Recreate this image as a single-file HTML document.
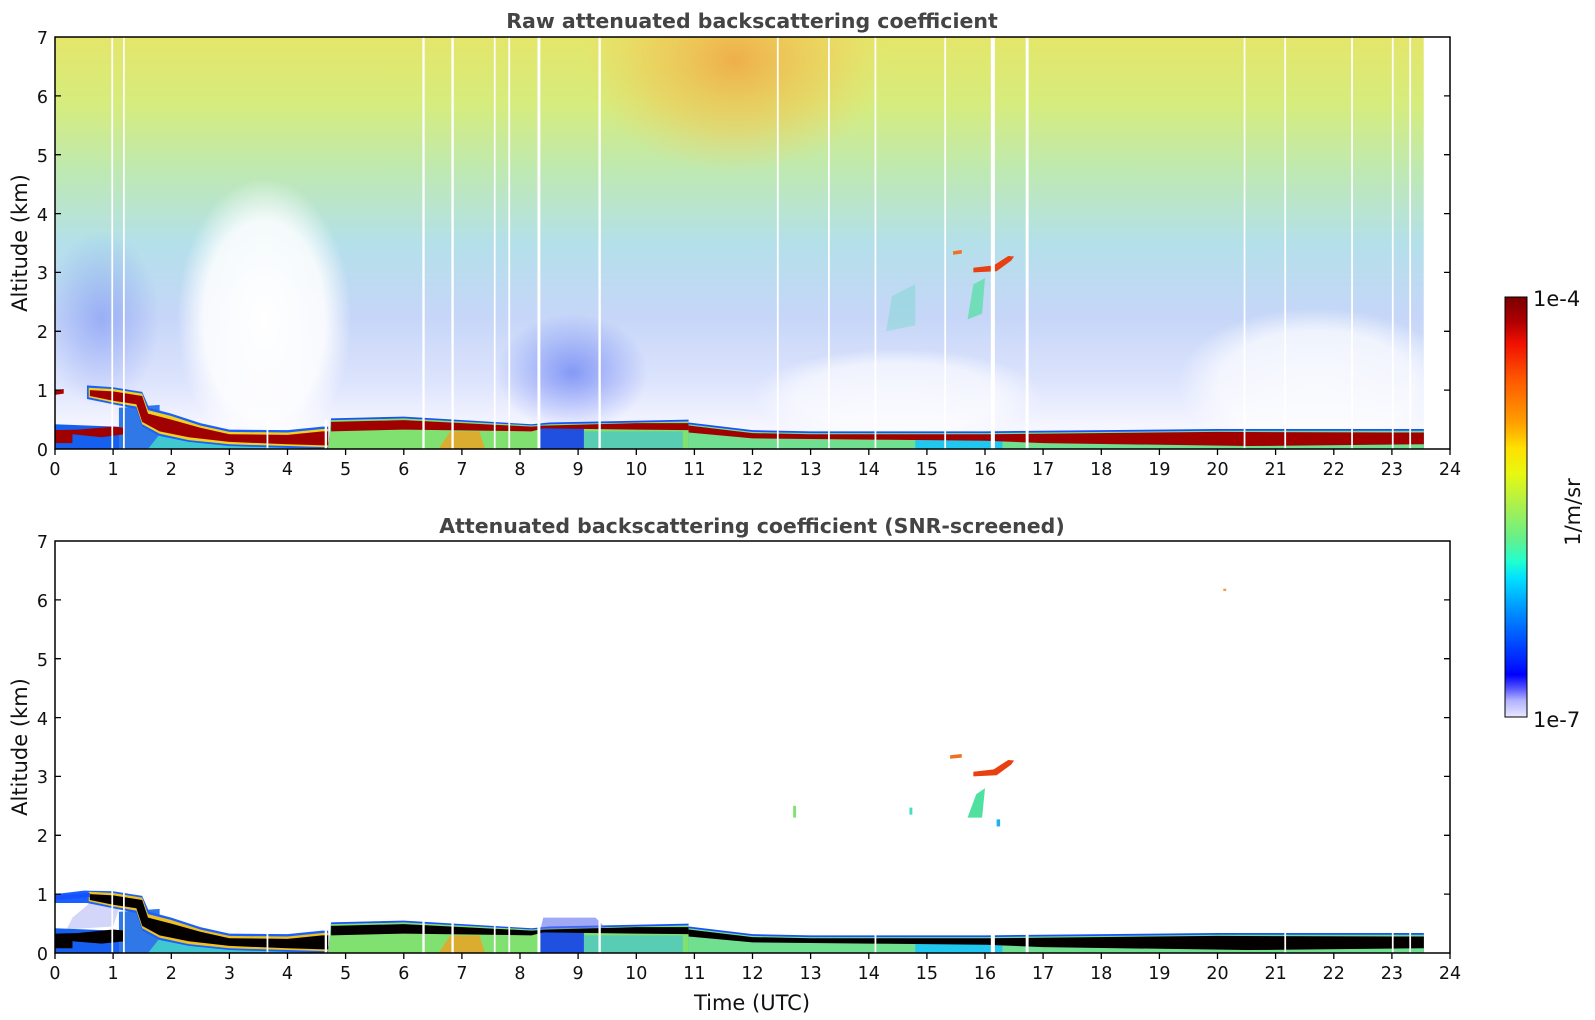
<!DOCTYPE html>
<html><head><meta charset="utf-8"><style>
html,body{margin:0;padding:0;background:#fff;width:1595px;height:1020px;overflow:hidden}
svg{display:block}
text{font-family:"DejaVu Sans","Liberation Sans",sans-serif;fill:#111}
</style></head><body>
<svg width="1595" height="1020" viewBox="0 0 1595 1020" xmlns="http://www.w3.org/2000/svg">
<defs>
<clipPath id="c1"><rect x="0" y="0" width="23.55" height="7"/></clipPath>
<linearGradient id="bg" x1="0" y1="0" x2="0" y2="1">
<stop offset="0" stop-color="#ffffff"/>
<stop offset="0.07" stop-color="#f2f3ff"/>
<stop offset="0.16" stop-color="#dde4fd"/>
<stop offset="0.32" stop-color="#c6d6f8"/>
<stop offset="0.5" stop-color="#b4e0ea"/>
<stop offset="0.68" stop-color="#bfe9b0"/>
<stop offset="0.84" stop-color="#d6ec7c"/>
<stop offset="1" stop-color="#e4e66a"/>
</linearGradient>
<radialGradient id="orng" cx="0.5" cy="0.5" r="0.5">
<stop offset="0" stop-color="#f3a040" stop-opacity="0.8"/>
<stop offset="0.6" stop-color="#f5c050" stop-opacity="0.45"/>
<stop offset="1" stop-color="#f5d060" stop-opacity="0"/>
</radialGradient>
<radialGradient id="wht" cx="0.5" cy="0.5" r="0.5">
<stop offset="0" stop-color="#fff" stop-opacity="1"/>
<stop offset="0.7" stop-color="#fff" stop-opacity="0.85"/>
<stop offset="1" stop-color="#fff" stop-opacity="0"/>
</radialGradient>
<radialGradient id="blu" cx="0.5" cy="0.5" r="0.5">
<stop offset="0" stop-color="#3050f0" stop-opacity="0.5"/>
<stop offset="1" stop-color="#3050f0" stop-opacity="0"/>
</radialGradient>
<linearGradient id="cb" x1="0" y1="0" x2="0" y2="1">
<stop offset="0" stop-color="#7a0000"/>
<stop offset="0.06" stop-color="#b00000"/>
<stop offset="0.11" stop-color="#f01000"/>
<stop offset="0.2" stop-color="#ff5a00"/>
<stop offset="0.3" stop-color="#ffa000"/>
<stop offset="0.36" stop-color="#ffe000"/>
<stop offset="0.42" stop-color="#e8f810"/>
<stop offset="0.5" stop-color="#a8f050"/>
<stop offset="0.58" stop-color="#60f090"/>
<stop offset="0.63" stop-color="#20ffd0"/>
<stop offset="0.67" stop-color="#00e0ff"/>
<stop offset="0.74" stop-color="#0098ff"/>
<stop offset="0.8" stop-color="#0060ff"/>
<stop offset="0.87" stop-color="#0020ff"/>
<stop offset="0.9" stop-color="#0000ff"/>
<stop offset="0.93" stop-color="#5050ff"/>
<stop offset="0.96" stop-color="#b0b0ff"/>
<stop offset="1" stop-color="#e8e8ff"/>
</linearGradient>
</defs>

<!-- ============ TOP PLOT ============ -->
<text x="752" y="28" text-anchor="middle" font-size="20.5" font-weight="bold" style="fill:#444">Raw attenuated backscattering coefficient</text>
<g transform="translate(55 449) scale(58.125 -58.86)">
 <g clip-path="url(#c1)">
  <rect x="0" y="0" width="23.55" height="7" fill="url(#bg)"/>
  <ellipse cx="11.7" cy="6.6" rx="2.6" ry="1.9" fill="url(#orng)"/>
  <ellipse cx="3.6" cy="2.2" rx="1.5" ry="2.4" fill="url(#wht)"/>
  <ellipse cx="21.7" cy="1.1" rx="2.4" ry="1.3" fill="url(#wht)" opacity="0.8"/>
  <ellipse cx="14.5" cy="0.9" rx="2.5" ry="0.8" fill="url(#wht)" opacity="0.7"/>
  <ellipse cx="8.9" cy="1.3" rx="1.3" ry="1.0" fill="url(#blu)"/>
  <ellipse cx="0.8" cy="2.2" rx="1.0" ry="1.5" fill="url(#blu)" opacity="0.6"/>
 </g>
  <polygon points="15.45,3.3 15.6,3.32 15.6,3.38 15.45,3.36" fill="#f07020"/>
  <polygon points="15.8,3.0 16.2,3.02 16.45,3.2 16.5,3.27 16.4,3.28 16.15,3.12 15.8,3.08" fill="#e84010"/>
  <polygon points="15.7,2.2 15.95,2.3 16.0,2.9 15.8,2.8" fill="#50e0a0" opacity="0.7"/>
  <polygon points="14.3,2.0 14.8,2.1 14.8,2.8 14.4,2.6" fill="#60d8c0" opacity="0.35"/>
  <polygon points="0,0 1.8,0 1.8,0.35 0,0.42" fill="#1560f0"/>
  <polygon points="1.1,0 1.8,0 1.8,0.75 1.1,0.7" fill="#3078e8"/>
  <polygon points="1.6,0 4.7,0 4.7,0.12 2.5,0.15 1.8,0.25" fill="#40c8d0"/>
  <polygon points="0.55,1.08 1.0,1.05 1.5,0.97 1.62,0.7 2.0,0.6 2.5,0.44 3.0,0.33 4.0,0.32 4.6,0.38 4.7,0.38 4.7,0 4.0,0.02 3.0,0.05 2.3,0.12 1.8,0.22 1.5,0.38 1.4,0.68 1.0,0.76 0.55,0.85" fill="#1860ff"/>
  <polygon points="0.58,1.04 1.0,1.02 1.5,0.94 1.6,0.66 2.0,0.56 2.5,0.4 3.0,0.29 4.0,0.28 4.6,0.34 4.7,0.34 4.7,0.03 4.0,0.05 3.0,0.08 2.3,0.15 1.8,0.26 1.5,0.42 1.4,0.72 1.0,0.79 0.58,0.88" fill="#f0d020"/>
  <polygon points="0.6,1.0 1.0,0.98 1.5,0.9 1.6,0.6 2.0,0.5 2.5,0.36 3.0,0.25 4.0,0.24 4.6,0.3 4.7,0.3 4.7,0.06 4.0,0.08 3.0,0.12 2.3,0.2 1.8,0.3 1.5,0.46 1.4,0.76 1.0,0.82 0.6,0.9" fill="#a00000"/>
  <polygon points="0,0.32 0.4,0.33 1.0,0.38 1.2,0.36 1.2,0.25 0.8,0.2 0.3,0.25 0.3,0.1 0,0.1" fill="#a00000"/>
  <polygon points="0,0.92 0.15,0.94 0.15,1.02 0,1.0" fill="#b00000"/>
  <polygon points="4.7,0 10.9,0 10.9,0.5 10,0.48 8.5,0.45 8.2,0.42 6,0.55 4.75,0.52" fill="#1850ff"/>
  <polygon points="4.7,0 10.9,0 10.9,0.47 10,0.45 8.5,0.42 8.2,0.4 6,0.52 4.75,0.49" fill="#80e070"/>
  <polygon points="6.6,0 7.4,0 7.3,0.3 6.8,0.3" fill="#f0a020" opacity="0.8"/>
  <polygon points="8.35,0 9.1,0 9.1,0.4 8.35,0.4" fill="#2050e0"/>
  <polygon points="9.1,0 10.8,0 10.8,0.3 9.1,0.3" fill="#40c0e0" opacity="0.6"/>
  <polygon points="4.75,0.3 6,0.33 8.2,0.3 8.4,0.35 10,0.33 10.9,0.32 10.9,0.44 10,0.44 8.5,0.4 8.2,0.38 6,0.49 4.75,0.46" fill="#a00000"/>
  <polygon points="10.9,0 23.55,0 23.55,0.34 20,0.34 16,0.3 13,0.3 12,0.32 10.9,0.45" fill="#1850ff"/>
  <polygon points="10.9,0 23.55,0 23.55,0.31 20,0.31 16,0.27 13,0.27 12,0.29 10.9,0.42" fill="#70e090"/>
  <polygon points="14.8,0 16.3,0 16.3,0.15 14.8,0.15" fill="#20c8f0"/>
  <polygon points="10.9,0.28 12,0.18 14,0.16 16,0.14 17,0.1 20.5,0.05 23.55,0.08 23.55,0.28 20,0.29 16,0.25 13,0.25 12,0.27 10.9,0.4" fill="#a00000"/>
  <g fill="#fff">
    <rect x="0.97" y="0" width="0.03" height="7"/><rect x="1.17" y="0" width="0.03" height="7"/>
    <rect x="3.64" y="0" width="0.03" height="0.5"/><rect x="4.64" y="0" width="0.04" height="0.5"/>
    <rect x="6.32" y="0" width="0.04" height="7"/><rect x="6.82" y="0" width="0.04" height="7"/>
    <rect x="7.55" y="0" width="0.03" height="7"/><rect x="7.8" y="0" width="0.03" height="7"/>
    <rect x="8.3" y="0" width="0.05" height="7"/><rect x="9.35" y="0" width="0.04" height="7"/>
    <rect x="12.42" y="0" width="0.03" height="7"/><rect x="13.3" y="0" width="0.03" height="7"/>
    <rect x="14.1" y="0" width="0.03" height="7"/><rect x="15.3" y="0" width="0.03" height="7"/>
    <rect x="16.1" y="0" width="0.07" height="7"/><rect x="16.7" y="0" width="0.05" height="7"/>
    <rect x="20.45" y="0" width="0.03" height="7"/><rect x="21.15" y="0" width="0.03" height="7"/>
    <rect x="22.3" y="0" width="0.03" height="7"/><rect x="23.0" y="0" width="0.03" height="7"/>
    <rect x="23.3" y="0" width="0.03" height="7"/>
  </g>
</g>
<rect x="55" y="37" width="1395" height="412" fill="none" stroke="#000" stroke-width="1.5"/>

<!-- ============ BOTTOM PLOT ============ -->
<text x="752" y="533" text-anchor="middle" font-size="20.5" font-weight="bold" style="fill:#444">Attenuated backscattering coefficient (SNR-screened)</text>
<g transform="translate(55 953) scale(58.125 -58.86)">
  <polygon points="0.2,0.4 1.0,0.45 1.15,0.9 0.6,0.85 0.3,0.6" fill="#c8ccf6" opacity="0.8"/>
  <polygon points="0,0 1.8,0 1.8,0.35 0,0.42" fill="#1560f0"/>
  <polygon points="1.1,0 1.8,0 1.8,0.75 1.1,0.7" fill="#3078e8"/>
  <polygon points="1.6,0 4.7,0 4.7,0.12 2.5,0.15 1.8,0.25" fill="#40c8d0"/>
  <polygon points="0,1.0 0.5,1.06 1.0,1.05 1.5,0.97 1.62,0.7 2.0,0.6 2.5,0.44 3.0,0.33 4.0,0.32 4.6,0.38 4.7,0.38 4.7,0 4.0,0.02 3.0,0.05 2.3,0.12 1.8,0.22 1.5,0.38 1.4,0.68 1.0,0.76 0.55,0.85 0,0.85" fill="#1860ff"/>
  <polygon points="0.58,1.04 1.0,1.02 1.5,0.94 1.6,0.66 2.0,0.56 2.5,0.4 3.0,0.29 4.0,0.28 4.6,0.34 4.7,0.34 4.7,0.03 4.0,0.05 3.0,0.08 2.3,0.15 1.8,0.26 1.5,0.42 1.4,0.72 1.0,0.79 0.58,0.88" fill="#f0c020"/>
  <polygon points="0.6,1.0 1.0,0.98 1.5,0.9 1.6,0.6 2.0,0.5 2.5,0.36 3.0,0.25 4.0,0.24 4.6,0.3 4.7,0.3 4.7,0.06 4.0,0.08 3.0,0.12 2.3,0.2 1.8,0.3 1.5,0.46 1.4,0.76 1.0,0.82 0.6,0.9" fill="#050000"/>
  <polygon points="0,0.33 0.4,0.34 1.0,0.4 1.2,0.38 1.2,0.2 0.8,0.16 0.3,0.2 0.3,0.08 0,0.08" fill="#050000"/>
  <polygon points="0,0.9 0.6,0.95 0.6,1.02 0,0.98" fill="#1850ff"/>
  <polygon points="4.7,0 10.9,0 10.9,0.5 10,0.48 8.5,0.45 8.2,0.42 6,0.55 4.75,0.52" fill="#1850ff"/>
  <polygon points="4.7,0 10.9,0 10.9,0.47 10,0.45 8.5,0.42 8.2,0.4 6,0.52 4.75,0.49" fill="#80e070"/>
  <polygon points="6.6,0 7.4,0 7.3,0.3 6.8,0.3" fill="#f0a020" opacity="0.8"/>
  <polygon points="8.35,0 9.1,0 9.1,0.4 8.35,0.4" fill="#2050e0"/>
  <polygon points="8.35,0.4 9.5,0.4 9.3,0.6 8.4,0.6" fill="#6070f0" opacity="0.6"/>
  <polygon points="9.1,0 10.8,0 10.8,0.3 9.1,0.3" fill="#40c0e0" opacity="0.6"/>
  <polygon points="4.75,0.3 6,0.33 8.2,0.3 8.4,0.35 10,0.33 10.9,0.32 10.9,0.44 10,0.44 8.5,0.4 8.2,0.38 6,0.49 4.75,0.46" fill="#050000"/>
  <polygon points="10.9,0 23.55,0 23.55,0.34 20,0.34 16,0.3 13,0.3 12,0.32 10.9,0.45" fill="#1850ff"/>
  <polygon points="10.9,0 23.55,0 23.55,0.31 20,0.31 16,0.27 13,0.27 12,0.29 10.9,0.42" fill="#70e090"/>
  <polygon points="14.8,0 16.3,0 16.3,0.15 14.8,0.15" fill="#20c8f0"/>
  <polygon points="10.9,0.28 12,0.18 14,0.16 16,0.14 17,0.1 20.5,0.05 23.55,0.08 23.55,0.28 20,0.29 16,0.25 13,0.25 12,0.27 10.9,0.4" fill="#050000"/>
  <polygon points="15.4,3.3 15.6,3.32 15.6,3.38 15.4,3.36" fill="#f07020"/>
  <polygon points="15.8,3.0 16.2,3.02 16.45,3.2 16.5,3.27 16.4,3.28 16.15,3.12 15.8,3.08" fill="#e84010"/>
  <polygon points="15.7,2.3 15.95,2.3 16.0,2.8 15.85,2.7" fill="#50e0a0"/>
  <rect x="16.2" y="2.15" width="0.06" height="0.12" fill="#20b0f0"/>
  <rect x="12.7" y="2.3" width="0.05" height="0.2" fill="#80e070"/>
  <rect x="14.7" y="2.35" width="0.05" height="0.12" fill="#40e0c0"/>
  <rect x="20.1" y="6.15" width="0.05" height="0.04" fill="#f0a040"/>
  <g fill="#fff">
    <rect x="0.97" y="0" width="0.03" height="1.2"/><rect x="1.17" y="0" width="0.03" height="1.2"/>
    <rect x="3.64" y="0" width="0.03" height="0.5"/><rect x="4.64" y="0" width="0.04" height="0.6"/>
    <rect x="6.32" y="0" width="0.04" height="0.6"/><rect x="6.82" y="0" width="0.04" height="0.6"/>
    <rect x="7.55" y="0" width="0.03" height="0.6"/><rect x="7.8" y="0" width="0.03" height="0.6"/>
    <rect x="8.3" y="0" width="0.05" height="0.6"/><rect x="9.35" y="0" width="0.04" height="0.6"/>
    <rect x="14.1" y="0" width="0.03" height="0.5"/><rect x="16.1" y="0" width="0.07" height="0.5"/>
    <rect x="16.7" y="0" width="0.05" height="0.5"/><rect x="21.15" y="0" width="0.03" height="0.5"/>
    <rect x="23.0" y="0" width="0.03" height="0.5"/><rect x="23.3" y="0" width="0.03" height="0.5"/>
  </g>
</g>
<rect x="55" y="541" width="1395" height="412" fill="none" stroke="#000" stroke-width="1.5"/>

<g stroke="#000" stroke-width="1.3">
<path d="M55 449v6M113.1 449v6M171.3 449v6M229.4 449v6M287.5 449v6M345.6 449v6M403.8 449v6M461.9 449v6M520 449v6M578.1 449v6M636.3 449v6M694.4 449v6M752.5 449v6M810.6 449v6M868.8 449v6M926.9 449v6M985 449v6M1043.1 449v6M1101.3 449v6M1159.4 449v6M1217.5 449v6M1275.6 449v6M1333.8 449v6M1391.9 449v6M1450 449v6"/>
<path d="M55 953v6M113.1 953v6M171.3 953v6M229.4 953v6M287.5 953v6M345.6 953v6M403.8 953v6M461.9 953v6M520 953v6M578.1 953v6M636.3 953v6M694.4 953v6M752.5 953v6M810.6 953v6M868.8 953v6M926.9 953v6M985 953v6M1043.1 953v6M1101.3 953v6M1159.4 953v6M1217.5 953v6M1275.6 953v6M1333.8 953v6M1391.9 953v6M1450 953v6"/>
<path d="M55 390.1h6M55 331.3h6M55 272.4h6M55 213.6h6M55 154.7h6M55 95.9h6M1450 390.1h-6M1450 331.3h-6M1450 272.4h-6M1450 213.6h-6M1450 154.7h-6M1450 95.9h-6"/>
<path d="M55 894.1h6M55 835.3h6M55 776.4h6M55 717.6h6M55 658.7h6M55 599.9h6M1450 894.1h-6M1450 835.3h-6M1450 776.4h-6M1450 717.6h-6M1450 658.7h-6M1450 599.9h-6"/>
</g>
<g font-size="17.5" text-anchor="middle">
<text x="55" y="475">0</text><text x="113.1" y="475">1</text><text x="171.3" y="475">2</text><text x="229.4" y="475">3</text><text x="287.5" y="475">4</text><text x="345.6" y="475">5</text><text x="403.8" y="475">6</text><text x="461.9" y="475">7</text><text x="520" y="475">8</text><text x="578.1" y="475">9</text><text x="636.3" y="475">10</text><text x="694.4" y="475">11</text><text x="752.5" y="475">12</text><text x="810.6" y="475">13</text><text x="868.8" y="475">14</text><text x="926.9" y="475">15</text><text x="985" y="475">16</text><text x="1043.1" y="475">17</text><text x="1101.3" y="475">18</text><text x="1159.4" y="475">19</text><text x="1217.5" y="475">20</text><text x="1275.6" y="475">21</text><text x="1333.8" y="475">22</text><text x="1391.9" y="475">23</text><text x="1450" y="475">24</text>
<text x="55" y="979">0</text><text x="113.1" y="979">1</text><text x="171.3" y="979">2</text><text x="229.4" y="979">3</text><text x="287.5" y="979">4</text><text x="345.6" y="979">5</text><text x="403.8" y="979">6</text><text x="461.9" y="979">7</text><text x="520" y="979">8</text><text x="578.1" y="979">9</text><text x="636.3" y="979">10</text><text x="694.4" y="979">11</text><text x="752.5" y="979">12</text><text x="810.6" y="979">13</text><text x="868.8" y="979">14</text><text x="926.9" y="979">15</text><text x="985" y="979">16</text><text x="1043.1" y="979">17</text><text x="1101.3" y="979">18</text><text x="1159.4" y="979">19</text><text x="1217.5" y="979">20</text><text x="1275.6" y="979">21</text><text x="1333.8" y="979">22</text><text x="1391.9" y="979">23</text><text x="1450" y="979">24</text>
</g>
<g font-size="17.5" text-anchor="end">
<text x="48" y="456">0</text><text x="48" y="397">1</text><text x="48" y="338">2</text><text x="48" y="279">3</text><text x="48" y="221">4</text><text x="48" y="162">5</text><text x="48" y="103">6</text><text x="48" y="44">7</text>
<text x="48" y="960">0</text><text x="48" y="901">1</text><text x="48" y="842">2</text><text x="48" y="783">3</text><text x="48" y="725">4</text><text x="48" y="666">5</text><text x="48" y="607">6</text><text x="48" y="548">7</text>
</g>
<text transform="translate(27 243) rotate(-90)" text-anchor="middle" font-size="21">Altitude (km)</text>
<text transform="translate(27 747) rotate(-90)" text-anchor="middle" font-size="21">Altitude (km)</text>
<text x="752" y="1010" text-anchor="middle" font-size="21">Time (UTC)</text>

<rect x="1505" y="297" width="22" height="420" fill="url(#cb)" stroke="#000" stroke-width="1"/>
<text x="1533" y="306" font-size="21">1e-4</text>
<text x="1533" y="727" font-size="21">1e-7</text>
<text transform="translate(1580 512) rotate(-90)" text-anchor="middle" font-size="21">1/m/sr</text>
</svg>
</body></html>
